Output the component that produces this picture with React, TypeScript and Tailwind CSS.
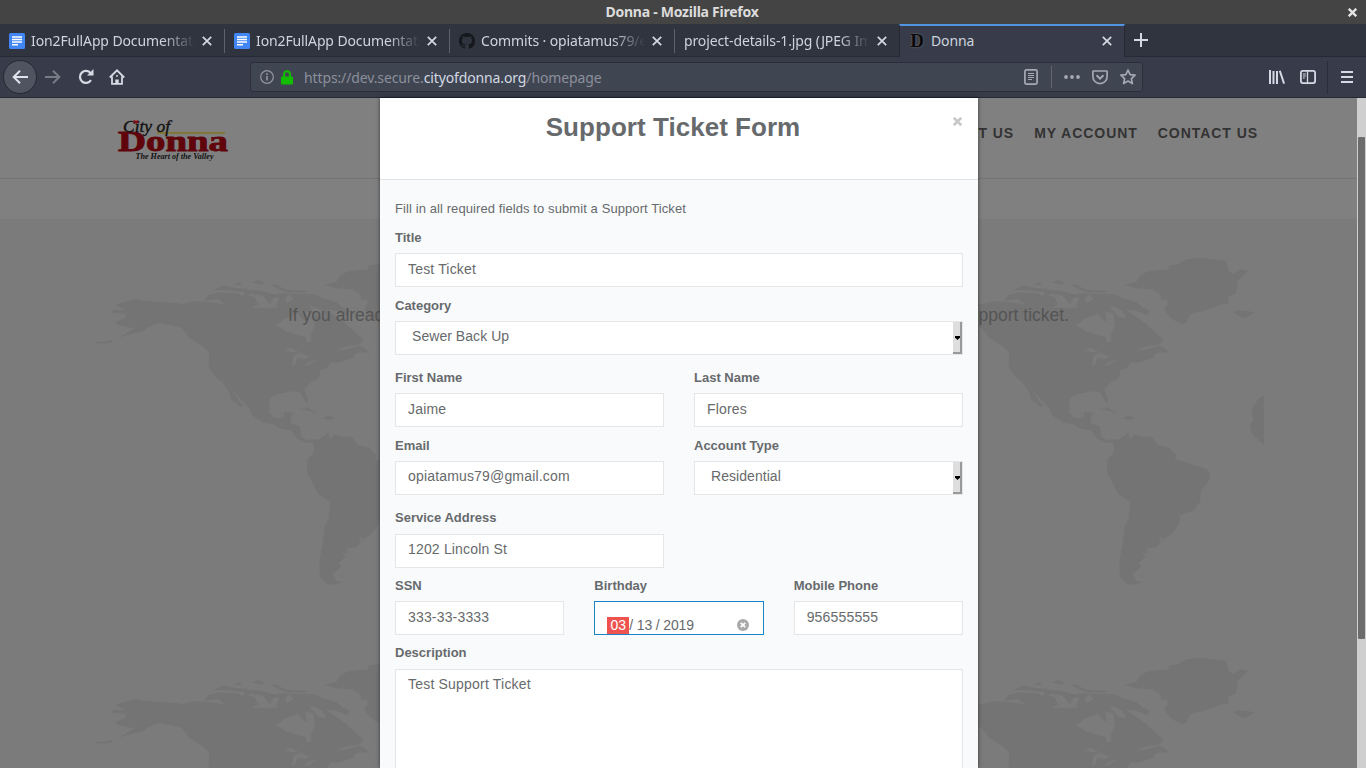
import React from "react";

const sans = "font-['Liberation_Sans',Arial,sans-serif]";

function DocIcon() {
  return (
    <svg width="16" height="16" viewBox="0 0 16 16" className="shrink-0">
      <rect width="16" height="16" rx="1.5" fill="#4285f4" />
      <path d="M3 4h10M3 6.5h10M3 9h10M3 11.8h6" stroke="#fff" strokeWidth="1.5" />
    </svg>
  );
}

function GithubIcon() {
  return (
    <svg width="16" height="16" viewBox="0 0 16 16" className="shrink-0" fill="#15171c">
      <path d="M8 0C3.58 0 0 3.58 0 8c0 3.54 2.29 6.53 5.47 7.59.4.07.55-.17.55-.38 0-.19-.01-.82-.01-1.49-2.01.37-2.53-.49-2.69-.94-.09-.23-.48-.94-.82-1.13-.28-.15-.68-.52-.01-.53.63-.01 1.08.58 1.23.82.72 1.21 1.87.87 2.33.66.07-.52.28-.87.51-1.07-1.78-.2-3.64-.89-3.64-3.95 0-.87.31-1.59.82-2.15-.08-.2-.36-1.02.08-2.12 0 0 .67-.21 2.2.82.64-.18 1.32-.27 2-.27s1.36.09 2 .27c1.53-1.04 2.2-.82 2.2-.82.44 1.1.16 1.92.08 2.12.51.56.82 1.27.82 2.15 0 3.07-1.87 3.75-3.65 3.95.29.25.54.73.54 1.48 0 1.07-.01 1.93-.01 2.2 0 .21.15.46.55.38A8.01 8.01 0 0 0 16 8c0-4.42-3.58-8-8-8z" />
    </svg>
  );
}

function Cross({ size = 10, color = "#d3dae3", width = 1.7 }: { size?: number; color?: string; width?: number }) {
  return (
    <svg width={size} height={size} viewBox="0 0 10 10" className="shrink-0">
      <path d="M.8.8l8.4 8.4M9.2.8L.8 9.2" stroke={color} strokeWidth={width} fill="none" />
    </svg>
  );
}

function Tab({ icon, text, fade = true, active = false, sep = true }: { icon?: React.ReactNode; text: string; fade?: boolean; active?: boolean; sep?: boolean }) {
  return (
    <div
      className={
        active
          ? "-ml-px flex h-[33px] w-[226px] items-start border-x border-t-2 border-x-[#252731] border-t-[#5294e2] bg-[#383c4a] pr-[12px] pl-[9px]"
          : "flex h-[33px] w-[225px] items-start border-b border-[#262933] pt-[2px] pl-[9px]"
      }
    >
      <div className="flex h-[29px] min-w-0 flex-1 items-center">
        {icon && <span className="mr-[6px] flex w-[16px] shrink-0">{icon}</span>}
        <span className={"min-w-0 flex-1 overflow-hidden text-[14px] leading-[22px] tracking-[-0.12px] whitespace-nowrap text-[#cdd4de] " + (fade ? "[mask-image:linear-gradient(to_right,black_calc(100%-32px),transparent)]" : "")}>
          {text}
        </span>
        <span className={active ? "flex" : "mx-[7px] mr-[12px] flex"}><Cross /></span>
      </div>
      {!active && <div className={"mt-[3px] h-[24px] w-px " + (sep ? "bg-[#5c616e]" : "")} />}
    </div>
  );
}

function Chrome() {
  return (
    <div className="font-['Noto_Sans',sans-serif]">
      <div className="flex h-[24px] items-center bg-[#444444] pr-[9px] pl-[16px]">
        <div className="flex-1 text-center text-[14px] leading-[24px] font-bold text-[#dcdcdc]">
          <span className="tracking-[-0.25px]">Donna - Mozilla Firefox</span>
        </div>
        <Cross size={9} color="#e4e4e4" width={2.6} />
      </div>
      <div className="flex h-[33px] border-b border-[#262933] bg-[#2f343f]">
        <Tab icon={<DocIcon />} text="Ion2FullApp Documentation" />
        <Tab icon={<DocIcon />} text="Ion2FullApp Documentation" />
        <Tab icon={<GithubIcon />} text="Commits · opiatamus79/epay" />
        <Tab text="project-details-1.jpg (JPEG Image" sep={false} />
        <Tab active fade={false} text="Donna" icon={<span className="w-[16px] text-center font-['Liberation_Serif',serif] text-[19px] leading-[20px] font-bold text-[#0a0a0a] [text-shadow:0_0_2px_#777]">D</span>} />
        <svg width="14" height="14" viewBox="0 0 14 14" className="mt-[9px] ml-[9px]">
          <path d="M7 0v14M0 7h14" stroke="#d3dae3" strokeWidth="2" />
        </svg>
      </div>
      <div className="flex h-[41px] items-center border-b border-[#262933] bg-[#383c4a] pl-[3px]">
        <div className="flex h-[34px] w-[34px] items-center justify-center rounded-full border border-[#262933] bg-[#505460]">
          <svg width="16" height="14" viewBox="0 0 16 14" fill="none" stroke="#dfe4ec" strokeWidth="2">
            <path d="M16 7H1.5M8 .8L1.7 7 8 13.2" />
          </svg>
        </div>
        <svg width="16" height="14" viewBox="0 0 16 14" fill="none" stroke="#777b86" strokeWidth="2" className="ml-[8px]">
          <path d="M0 7h14.5M8 .8L14.3 7 8 13.2" />
        </svg>
        <svg width="16" height="16" viewBox="0 0 16 16" fill="none" stroke="#d3dae3" strokeWidth="2.2" className="ml-[17px]">
          <path d="M12.7 4.2A6 6 0 1 0 13 11.2" />
          <path d="M15.5 0v6.5H9z" fill="#d3dae3" stroke="none" />
        </svg>
        <svg width="16" height="16" viewBox="0 0 16 16" fill="none" stroke="#d3dae3" strokeWidth="1.8" className="ml-[15px]">
          <path d="M.8 8.5L8 1.3l7.2 7.2M3 7.5v7.4h10V7.5" />
          <path d="M6.3 15v-4.5h3.4V15z" fill="#d3dae3" stroke="none" />
          <path d="M7.2 6.8h1.6" />
        </svg>
        <div className="ml-[125px] flex h-[30px] w-[893px] items-center rounded-[3px] border border-[#2b2e39] bg-[#404552] pr-[6px] pl-[9px]">
          <svg width="14" height="14" viewBox="0 0 14 14" fill="none" stroke="#9196a1" strokeWidth="1.2">
            <circle cx="7" cy="7" r="6.3" />
            <path d="M7 6v4.5M7 3.3v1.6" strokeWidth="1.6" />
          </svg>
          <svg width="12" height="15" viewBox="0 0 12 15" className="ml-[7px]">
            <path d="M3 7V4.3a3 3 0 0 1 6 0V7" fill="none" stroke="#12bc00" strokeWidth="2" />
            <rect y="6.5" width="12" height="8" rx="1" fill="#12bc00" />
          </svg>
          <span className="ml-[11px] flex-1 pt-[2px] text-[14px] leading-[20px] tracking-[-0.12px] whitespace-nowrap text-[#8b909b]">
            https://dev.secure.<span className="text-[#d3dae3]">cityofdonna.org</span>/homepage
          </span>
          <svg width="14" height="16" viewBox="0 0 14 16" fill="none" stroke="#a3a8b3">
            <rect x=".9" y=".9" width="12.2" height="14.2" rx="1.5" strokeWidth="1.7" />
            <path d="M4 4.5h6M4 6.5h6M4 8.5h6M4 10.5h4" />
          </svg>
          <div className="ml-[13px] h-[22px] w-px bg-[#626773]" />
          <svg width="16" height="4" viewBox="0 0 16 4" fill="#a3a8b3" className="ml-[12px]">
            <circle cx="2" cy="2" r="1.9" /><circle cx="8" cy="2" r="1.9" /><circle cx="14" cy="2" r="1.9" />
          </svg>
          <svg width="16" height="15" viewBox="0 0 16 15" fill="none" stroke="#a3a8b3" strokeWidth="1.7" className="ml-[12px]">
            <path d="M1.5 1h13a.6.6 0 0 1 .6.6V6.5a7.1 7.1 0 0 1-14.2 0V1.6A.6.6 0 0 1 1.5 1z" />
            <path d="M4.5 5.2L8 8.6l3.5-3.4" strokeWidth="2" />
          </svg>
          <svg width="16" height="16" viewBox="0 0 16 16" fill="none" stroke="#a3a8b3" strokeWidth="1.7" strokeLinejoin="round" className="ml-[12px]">
            <path d="M8 1l2.1 4.6 5 .6-3.7 3.4 1 5L8 12.1l-4.4 2.5 1-5L.9 6.2l5-.6z" />
          </svg>
        </div>
        <svg width="16" height="14" viewBox="0 0 16 14" fill="none" stroke="#d3dae3" strokeWidth="2" className="ml-[126px]">
          <path d="M1 0v14M4.5 1v13M8 1v13M10.8 .8l4.3 12.8" />
        </svg>
        <svg width="16" height="14" viewBox="0 0 16 14" fill="none" stroke="#d3dae3" strokeWidth="1.8" className="ml-[15px]">
          <rect x=".9" y=".9" width="14.2" height="12.2" rx="2" />
          <path d="M7.5 1v12" strokeWidth="1.3" />
          <path d="M2.8 4h3M2.8 6h3M2.8 8h2" strokeWidth="1" />
        </svg>
        <div className="ml-[11px] h-[33px] w-px bg-[#2b2e39]" />
        <svg width="12" height="12" viewBox="0 0 12 12" stroke="#d3dae3" strokeWidth="2" className="ml-[13px]">
          <path d="M0 1h12M0 6h12M0 11h12" />
        </svg>
      </div>
    </div>
  );
}

function WorldMap({ className }: { className: string }) {
  return (
    <svg viewBox="0 0 1200 1080" width="400" height="360" className={className} fill="#747474">
      <path d="M105 195L130 187 165 177 205 184 295 190 305 193 345 184 400 188 435 193 415 177 375 182 385 165 420 157 470 160 490 167 500 150 540 152 580 163 620 160 700 163 735 177 770 187 790 205 812 213 800 226 770 212 735 208 790 245 820 272 850 300 835 315 800 318 765 335 790 330 835 318 850 322 866 337 830 338 820 352 780 367 750 368 740 385 722 390 715 415 690 430 672 447 685 480 680 490 670 475 660 456 635 453 610 460 590 462 570 475 567 515 578 530 595 535 610 533 612 517 638 518 630 550 660 558 663 590 680 600 703 597 715 600 745 577 750 598 765 583 790 592 812 588 835 615 870 625 888 645 885 660 905 663 950 678 975 685 990 698 990 712 980 732 963 752 960 785 942 812 918 818 900 828 898 850 875 882 850 897 835 885 843 905 830 922 803 925 800 940 785 938 797 950 775 970 785 978 758 1004 768 1022 788 1027 760 1034 738 1030 720 1010 718 965 728 910 735 855 745 840 751 785 715 762 680 695 682 660 703 635 700 607 680 609 650 595 635 572 600 565 580 553 550 548 515 525 510 508 455 448 490 500 482 502 450 475 452 465 430 430 405 410 386 380 387 335 370 320 345 305 325 290 302 262 235 248 200 265 190 275 160 280 115 293 165 265 122 258 105 248 138 230 137 222 92 217 105 208 138 212Z" />
      <path d="M400 150l30-14 35 8 40 3-10 10-50-6zM515 125l20-4 20 8-12 5zM568 132l20 2 30 16 65 3-10 5-60-3zM460 134l22-8v10zM45 306l15 0 38-6-3 8-40 3zM655 508l30-4 30 18-30-10zM730 535l15-9 18 8-8 5zM1058 215l20-4 25 3 18 2-10 10-22 8z" />
      <path d="M735 135L770 125 780 108 800 95 840 90 862 90 870 75 890 75 920 58 960 53 1038 63 1045 90 1058 102 1085 88 1105 92 1070 125 1073 140 1065 163 1045 168 1045 190 1025 192 1005 200 970 213 930 222 920 245 910 253 880 240 862 222 852 205 865 190 860 178 845 180 838 160 815 148 770 145Z" />
      <path d="M588 257L615 235 640 228 652 220 680 250 675 215 700 220 705 240 702 268 692 285 695 305 682 308 675 290 620 275ZM515 203l20-10-12-20 20-10 15 15 10 15 15-20 15 0-10 30zM612 335l20-12 25 12-20 2-17-3zM636 377l5-30 20-9 28 12-18 6-17-5-10 26zM672 377l15-12 28-8-30 20zM500 165l18-5 20 8-10 5zM620 190l-5-15 15-12 10 15zM690 195l35 15 15 25-25-5-20-20z" fill="#7b7b7b" />
    </svg>
  );
}

function Logo() {
  return (
    <svg width="112" height="44" viewBox="0 0 112 44" className="mt-[20px] ml-[117px]">
      <path d="M40 14.8h68" stroke="#84752d" strokeWidth="1.8" />
      <text x="1" y="33.3" textLength="110" lengthAdjust="spacingAndGlyphs" fontFamily="Liberation Serif" fontWeight="bold" fontSize="29.5" fill="#5f050b" stroke="#5f050b" strokeWidth="0.9">Donna</text>
      <text x="6" y="13.5" textLength="47" lengthAdjust="spacingAndGlyphs" fontFamily="Liberation Serif" fontStyle="italic" fontSize="17" fill="#111" stroke="#111" strokeWidth=".4">City of</text>
      <text x="18.5" y="41" textLength="78" lengthAdjust="spacingAndGlyphs" fontFamily="Liberation Serif" fontStyle="italic" fontWeight="bold" fontSize="8.5" fill="#111">The Heart of the Valley</text>
      <path d="M19 6l-3-3 1.5-1 1.5 1 2-1 .5 2z" fill="#8a0d18" />
    </svg>
  );
}

function Backdrop() {
  return (
    <div className="relative h-full w-full overflow-hidden bg-[#7b7b7b]">
      <div className="flex h-[81px] justify-between border-b border-[#747474] bg-[#808080]">
        <Logo />
        <nav className="mt-[26px] mr-[99px] flex gap-[20px] text-[14px] leading-[18px] font-bold tracking-[0.95px] whitespace-nowrap text-[#333333]">
          <span>ABOUT US</span>
          <span>MY ACCOUNT</span>
          <span>CONTACT US</span>
        </nav>
      </div>
      <div className="h-[40px] bg-[#808080]" />
      <WorldMap className="absolute top-[142px] left-[80px]" />
      <WorldMap className="absolute top-[142px] left-[880px]" />
      <WorldMap className="absolute top-[542px] left-[80px]" />
      <WorldMap className="absolute top-[542px] left-[880px]" />
      <svg width="15" height="50" viewBox="0 0 45 150" fill="#747474" className="absolute top-[297px] left-[1249px]">
        <path d="M45 0L30 8 8 45 13 75 2 95 12 120 45 150z" />
      </svg>
      <div className="relative mt-[84px] flex justify-between pr-[288px] pl-[288px] text-[17.5px] leading-[24px] text-[#555555]">
        <span>If you already</span>
        <span>support ticket.</span>
      </div>
    </div>
  );
}

function Label({ children }: { children: React.ReactNode }) {
  return <div className="h-[20px] text-[13px] leading-[20px] font-bold text-[#676a6c]">{children}</div>;
}

function Field({ label, value, gap = "mt-[5px]", line = "leading-[31px]" }: { label: string; value: string; gap?: string; line?: string }) {
  return (
    <div>
      <Label>{label}</Label>
      <div className={gap + " " + line + " h-[34px] border border-[#e5e6e7] bg-white px-[12px] text-[14px] tracking-[0.17px] text-[#676a6c]"}>{value}</div>
    </div>
  );
}

function Select({ label, value }: { label: string; value: string }) {
  return (
    <div>
      <Label>{label}</Label>
      <div className="mt-[5px] flex h-[34px] justify-between border border-[#e5e6e7] bg-white pl-[16px] text-[14px] leading-[29px] tracking-[0.05px] text-[#676a6c]">
        <span>{value}</span>
        <span className="flex w-[9px] items-center justify-end border-r-2 border-b-2 border-[#999] bg-[#dedede] pt-px">
          <svg width="5" height="4" viewBox="0 0 5 4" className="shrink-0"><path d="M0 0h5v1.5L2.5 4 0 1.5z" fill="#000" /></svg>
        </span>
      </div>
    </div>
  );
}

function Modal() {
  return (
    <div className="absolute top-0 left-[380px] flex h-[670px] w-[598px] flex-col bg-[#f9fafc] shadow-[0_0_4px_rgba(0,0,0,0.55)]">
      <div className="relative h-[82px] border-b border-[#e0e3e6] bg-white pt-[12px] text-center text-[26px] leading-[34px] font-bold text-[#676a6c]">
        <span className="mr-[12px] tracking-[0.04px]">Support Ticket Form</span>
        <span className="absolute top-[19px] right-[16px] flex"><Cross size={9} color="#c8c8c8" width={3} /></span>
      </div>
      <div className="flex flex-1 flex-col px-[15px] pt-[19px]">
        <div className="mb-[9px] h-[20px] text-[13px] leading-[20px] tracking-[0.09px] text-[#676a6c]">Fill in all required fields to submit a Support Ticket</div>
        <Field label="Title" value="Test Ticket" />
        <div className="mt-[9px]"><Select label="Category" value="Sewer Back Up" /></div>
        <div className="mt-[13px] grid grid-cols-2 gap-x-[30px] gap-y-[9px]">
          <Field label="First Name" value="Jaime" />
          <Field label="Last Name" value="Flores" />
          <Field label="Email" value="opiatamus79@gmail.com" line="leading-[29px]" />
          <Select label="Account Type" value="Residential" />
        </div>
        <div className="mt-[13px] w-[269px]"><Field label="Service Address" value="1202 Lincoln St" gap="mt-[6px]" line="leading-[29px]" /></div>
        <div className="mt-[8px] grid grid-cols-3 gap-[30px]">
          <Field label="SSN" value="333-33-3333" />
          <div>
            <Label>Birthday</Label>
            <div className="mt-[5px] flex h-[34px] items-end border border-[#1c84c6] bg-white pr-[14px] pl-[12px] text-[14px] leading-[14px] text-[#676a6c]">
              <span className="w-[22px] bg-[#ef5350] pt-px pb-[2px] text-center text-white">03</span>
              <span className="flex-1 pb-[2px] tracking-[-0.15px] whitespace-pre">/ 13 / 2019</span>
              <svg width="12" height="12" viewBox="0 0 12 12" className="mb-[3px]">
                <circle cx="6" cy="6" r="6" fill="#a9a9a9" />
                <path d="M3.8 3.8l4.4 4.4M8.2 3.8L3.8 8.2" stroke="#fff" strokeWidth="1.8" />
              </svg>
            </div>
          </div>
          <Field label="Mobile Phone" value="956555555" />
        </div>
        <div className="mt-[8px] flex flex-1 flex-col">
          <Label>Description</Label>
          <div className="mt-[6px] flex-1 border border-b-0 border-[#e5e6e7] bg-white px-[12px] pt-[4px] text-[14px] leading-[20px] tracking-[0.2px] text-[#676a6c]">Test Support Ticket</div>
        </div>
      </div>
    </div>
  );
}

export default function App() {
  return (
    <div className="h-[768px] w-[1366px] overflow-hidden">
      <Chrome />
      <div className={"relative flex h-[670px] " + sans}>
        <div className="h-full w-[1357px]"><Backdrop /></div>
        <div className="h-full w-[9px] bg-[#cfcfcf] px-px pt-[39px]">
          <div className="h-[502px] rounded-[1px] bg-[#6c6c6c]" />
        </div>
        <Modal />
      </div>
    </div>
  );
}
